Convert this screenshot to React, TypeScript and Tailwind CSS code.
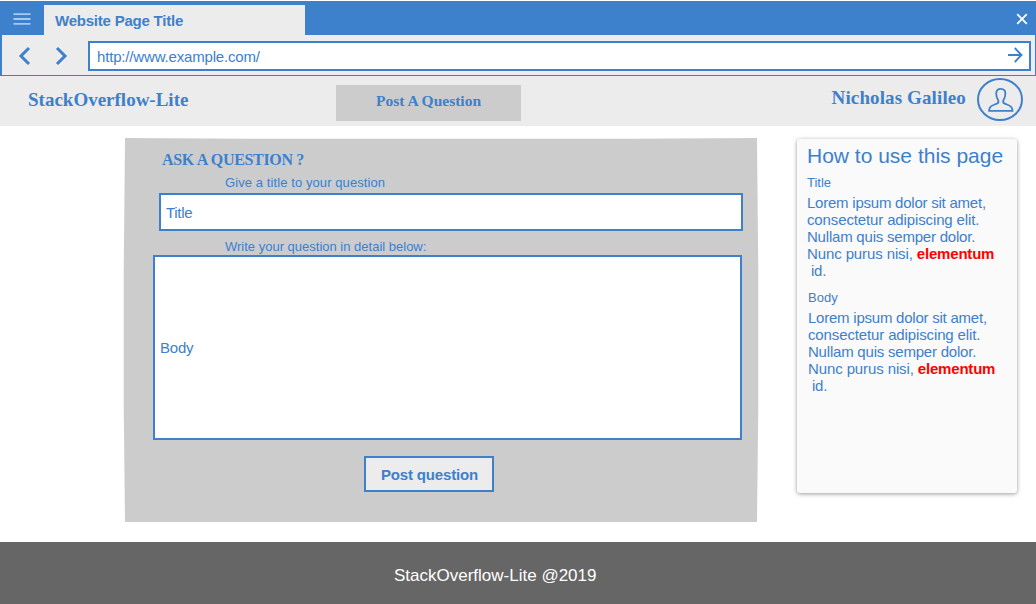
const sans = "font-['Liberation_Sans',Arial,sans-serif]";
const serif = "font-['Liberation_Serif','Times_New_Roman',serif] font-bold";

function Lorem() {
  return (
    <p className="text-[15px] leading-[17px] whitespace-nowrap">
      <span className="tracking-[-0.23px]">Lorem ipsum dolor sit amet,</span>
      <br />
      <span className="tracking-[-0.13px]">consectetur adipiscing elit.</span>
      <br />
      <span className="tracking-[-0.21px]">Nullam quis semper dolor.</span>
      <br />
      <span className="tracking-[-0.11px]">Nunc purus nisi, </span>
      <strong className="tracking-[-0.2px] text-[#ff0000]">elementum</strong>
      <br />
      <span className="tracking-[-0.2px]">&nbsp;id.</span>
    </p>
  );
}

function BrowserBar() {
  return (
    <div className="h-[76px] bg-white pt-px">
      <div className="flex h-[34px] items-end bg-[#3d80cc]">
        <div className="flex h-full w-11 shrink-0">
          <svg width="44" height="34" fill="none" stroke="#abc8ea" strokeWidth="1.8">
            <path d="M13.5 13.2H30.5M13.5 18H30.5M13.5 22.9H30.5" />
          </svg>
        </div>
        <div className="h-[30px] w-[261px] bg-[#ececec] pt-[7px] pl-[11px] text-[15px] leading-[17px] font-bold tracking-[-0.22px]">
          Website Page Title
        </div>
        <svg className="ml-auto" width="30" height="34" fill="none" stroke="#fff" strokeWidth="1.8">
          <path d="M11.2 13.2L20.8 22.8M20.8 13.2L11.2 22.8" />
        </svg>
      </div>
      <div className="flex h-[41px] border-r border-b border-l-2 border-[#3d80cc] bg-[#ececec] pt-[6px] pr-1">
        <svg className="shrink-0" width="86" height="30" fill="none" stroke="#3d80cc" strokeWidth="3">
          <path d="M27 7L19 15L27 23M55 7L63 15L55 23" />
        </svg>
        <div className="flex h-[30px] flex-1 justify-between border-2 border-[#3d80cc] bg-white pt-[5px] pl-[7px] text-[15px] leading-[17px] tracking-[-0.17px]">
          <span>http://www.example.com/</span>
          <svg className="-mt-[5px]" width="24" height="26" fill="none" stroke="#3d80cc" strokeWidth="1.9">
            <path d="M3 12H16M9.8 5L16.5 12L9.8 19" />
          </svg>
        </div>
      </div>
    </div>
  );
}

function SiteHeader() {
  return (
    <header className={`flex h-[50px] items-start bg-[#ececec] ${serif}`}>
      <div className="w-[336px] pt-[13px] pl-7 text-[19px] leading-[22px] whitespace-nowrap">
        <span>StackOverflow-Lite</span>
      </div>
      <button className="mt-[9px] flex h-9 w-[185px] justify-center bg-[#cccccc] pt-[7px] text-[15.5px] leading-[18px] font-bold">
        <span>Post A Question</span>
      </button>
      <div className="ml-auto pt-[11px] text-[19px] leading-[22px] tracking-[0.12px]">
        <span>Nicholas Galileo</span>
      </div>
      <svg className="mt-[2px] mr-[13px] ml-[11px]" width="46" height="44" fill="none" stroke="#3d80cc" strokeWidth="2">
        <ellipse cx="23" cy="21.5" rx="22" ry="20.5" />
        <path
          strokeWidth="1.8"
          d="M23.8 10.9C20.6 10.9 19.2 12.8 19.2 15.6C19.2 18.8 20 20.3 21 21.8C21.6 23 21.7 24.6 20.3 25.4C18 26.6 15.4 27 13.7 28.6C12.4 29.8 12.1 31.2 12.1 32.8H35.5C35.5 31.2 35.2 29.8 33.9 28.6C32.2 27 29.6 26.6 27.3 25.4C25.9 24.6 26 23 26.6 21.8C27.6 20.3 28.4 18.8 28.4 15.6C28.4 12.8 27 10.9 23.8 10.9Z"
        />
      </svg>
    </header>
  );
}

export default function App() {
  return (
    <div className={`h-[604px] w-[1036px] overflow-hidden bg-white text-[#3d80cc] ${sans}`}>
      <BrowserBar />
      <SiteHeader />
      <main className="flex h-[416px] items-start pt-3 pl-[123px]">
        <form className="flex h-[384px] w-[636px] flex-col items-start bg-[#cccccc] pt-[13px] [clip-path:polygon(2px_0,20%_0.8px,80%_0.8px,634px_0,635.3px_35%,635.3px_70%,634px_100%,2px_100%,0.7px_70%,0.7px_35%)]">
          <h1 className={`ml-[39px] text-[16px] leading-[18px] tracking-[-0.32px] whitespace-nowrap ${serif}`}>
            ASK A QUESTION ?
          </h1>
          <label className="mt-[6px] ml-[102px] text-[13px] leading-[15px] tracking-[0.09px]">Give a title to your question</label>
          <div className="mt-[3px] ml-9 h-[38px] w-[584px] border-2 border-[#3d80cc] bg-white pt-[9px] pl-[5px] text-[15px] leading-[17px] tracking-[-0.3px]">
            Title
          </div>
          <label className="mt-2 ml-[102px] text-[13px] leading-[15px]">Write your question in detail below:</label>
          <div className="mt-px ml-[30px] h-[185px] w-[589px] border-2 border-[#3d80cc] bg-white pt-[82px] pl-[5px] text-[15px] leading-[17px] tracking-[-0.2px]">
            Body
          </div>
          <button className="mt-4 ml-[241px] h-9 w-[130px] border-2 border-[#3d80cc] bg-[#ececec] pl-px text-[15px] leading-[17px] font-bold tracking-[-0.15px]">
            Post question
          </button>
        </form>
        <aside className="mt-px ml-[38px] h-[354px] w-[220px] rounded-[3px] bg-[#fafafa] pt-[5px] pl-[10px] shadow-[0_1px_4px_rgba(0,0,0,0.4)]">
          <h2 className="text-[21px] leading-6 whitespace-nowrap">How to use this page</h2>
          <h3 className="mt-[7px] mb-1 text-[13px] leading-[15px]">Title</h3>
          <Lorem />
          <div className="pl-px">
            <h3 className="mt-[11px] mb-1 text-[13px] leading-[15px]">Body</h3>
            <Lorem />
          </div>
        </aside>
      </main>
      <footer className="h-[62px] bg-[#666666] pt-6 pl-[394px] text-[17px] leading-5 text-white">
        StackOverflow-Lite @2019
      </footer>
    </div>
  );
}
